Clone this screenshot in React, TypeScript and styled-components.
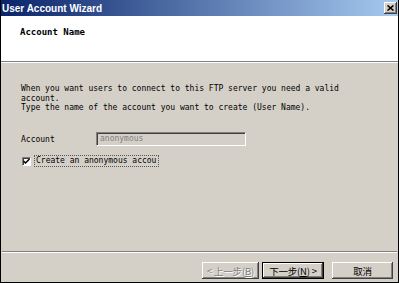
import React from 'react';
import styled, { createGlobalStyle } from 'styled-components';

const GlobalStyle = createGlobalStyle`
  html, body {
    margin: 0;
    padding: 0;
    background: #d4d0c8;
  }
`;

const mono = `'DejaVu Sans Mono', 'Liberation Mono', monospace`;

const Window = styled.div`
  width: 399px;
  height: 283px;
  box-sizing: border-box;
  display: flex;
  flex-direction: column;
  background: #d4d0c8;
  border-left: 1px solid #000;
  border-right: 1px solid #000;
  border-bottom: 1px solid #000;
  overflow: hidden;
`;

const TitleBar = styled.div`
  height: 16px;
  flex: none;
  display: flex;
  align-items: center;
  justify-content: space-between;
  padding: 0 1px 0 1px;
  background: linear-gradient(to right, #0a246a, #a6caf0);
`;

const TitleText = styled.span`
  color: #fff;
  font-family: 'Liberation Sans', sans-serif;
  font-weight: bold;
  font-size: 10px;
`;

const CloseButton = styled.div`
  width: 13px;
  height: 12px;
  background: #d4d0c8;
  box-sizing: border-box;
  box-shadow: inset -1px -1px #404040, inset 1px 1px #fff, inset -2px -2px #808080;
  display: flex;
  align-items: center;
  justify-content: center;
`;

const Header = styled.div`
  height: 46px;
  flex: none;
  background: #fff;
  padding: 11px 0 0 19px;
  box-sizing: border-box;
  border-bottom: 1px solid #808080;
  box-shadow: 0 1px 0 #fff;
`;

const HeaderTitle = styled.div`
  font-family: ${mono};
  font-weight: bold;
  font-size: 9px;
  color: #000;
`;

const Body = styled.div`
  flex: 1;
  display: flex;
  flex-direction: column;
  padding: 21px 0 0 20px;
  margin-top: 1px;
`;

const Intro = styled.div`
  font-family: ${mono};
  font-size: 8px;
  line-height: 9.7px;
  color: #000;
  white-space: pre;
`;

const FieldRow = styled.div`
  display: flex;
  align-items: center;
  margin-top: 19px;
  height: 14px;
`;

const Label = styled.span`
  width: 75px;
  font-family: ${mono};
  font-size: 8px;
  color: #000;
`;

const TextBox = styled.div`
  width: 150px;
  height: 14px;
  box-sizing: border-box;
  background: #d4d0c8;
  border-top: 1px solid #808080;
  border-left: 1px solid #808080;
  border-right: 1px solid #fff;
  border-bottom: 1px solid #fff;
  box-shadow: inset 1px 1px #404040;
  padding: 0 0 0 3px;
  font-family: ${mono};
  font-size: 8px;
  line-height: 12px;
  color: #808080;
`;

const CheckRow = styled.div`
  display: flex;
  align-items: center;
  margin-top: 9px;
  height: 12px;
`;

const CheckBox = styled.div`
  width: 9px;
  height: 9px;
  box-sizing: border-box;
  margin-left: 1px;
  background: #fff;
  border-top: 1px solid #808080;
  border-left: 1px solid #808080;
  border-right: 1px solid #fff;
  border-bottom: 1px solid #fff;
  box-shadow: inset 1px 1px #404040;
  display: flex;
  align-items: center;
  justify-content: center;
`;

const CheckLabel = styled.div`
  margin-left: 3px;
  height: 12px;
  box-sizing: border-box;
  border: 1px dotted #555;
  white-space: nowrap;
  padding: 0 2px 0 1px;
  font-family: ${mono};
  font-size: 8px;
  line-height: 10px;
  color: #000;
`;

const Spacer = styled.div`
  flex: 1;
`;

const Separator = styled.div`
  height: 1px;
  margin: 0 1px 10px 1px;
  background: #808080;
  box-shadow: 0 1px 0 #fff;
`;

const ButtonRow = styled.div`
  display: flex;
  justify-content: flex-end;
  align-items: center;
  padding: 0 5px 3px 0;
`;

const Button = styled.div<{ $width: number; $disabled?: boolean; $default?: boolean; $gap?: number }>`
  width: ${(p) => p.$width}px;
  height: 17px;
  box-sizing: border-box;
  margin-left: ${(p) => p.$gap ?? 0}px;
  display: flex;
  align-items: center;
  justify-content: center;
  background: #d4d0c8;
  font-family: 'Noto Sans CJK SC', 'Liberation Sans', sans-serif;
  font-size: 9.5px;
  letter-spacing: -0.2px;
  color: ${(p) => (p.$disabled ? '#808080' : '#000')};
  text-shadow: ${(p) => (p.$disabled ? '1px 1px 0 #fff' : 'none')};
  border: ${(p) => (p.$default ? '1px solid #000' : 'none')};
  box-shadow: inset -1px -1px #404040, inset 1px 1px #fff, inset -2px -2px #808080;
  white-space: nowrap;
`;

const Key = styled.u`
  text-decoration: underline;
`;

const introText = [
  'When you want users to connect to this FTP server you need a valid',
  'account.',
  'Type the name of the account you want to create (User Name).',
].join('\n');

export default function App() {
  return (
    <>
      <GlobalStyle />
      <Window>
        <TitleBar>
          <TitleText>User Account Wizard</TitleText>
          <CloseButton>
            <svg width="7" height="6" viewBox="0 0 7 6">
              <path d="M0.5 0.5 L6.5 5.5 M6.5 0.5 L0.5 5.5" stroke="#000" strokeWidth="1.6" />
            </svg>
          </CloseButton>
        </TitleBar>
        <Header>
          <HeaderTitle>Account Name</HeaderTitle>
        </Header>
        <Body>
          <Intro>{introText}</Intro>
          <FieldRow>
            <Label>Account</Label>
            <TextBox>anonymous</TextBox>
          </FieldRow>
          <CheckRow>
            <CheckBox>
              <svg width="7" height="7" viewBox="0 0 7 7">
                <path d="M0.5 3 L2.5 5 L6.5 1" stroke="#000" strokeWidth="1.5" fill="none" />
              </svg>
            </CheckBox>
            <CheckLabel>Create an anonymous accou</CheckLabel>
          </CheckRow>
          <Spacer />
        </Body>
        <Separator />
        <ButtonRow>
          <Button $width={57} $disabled>
            &lt; 上一步(<Key>B</Key>)
          </Button>
          <Button $width={62} $default $gap={3}>
            下一步(<Key>N</Key>) &gt;
          </Button>
          <Button $width={61} $gap={8}>
            取消
          </Button>
        </ButtonRow>
      </Window>
    </>
  );
}
